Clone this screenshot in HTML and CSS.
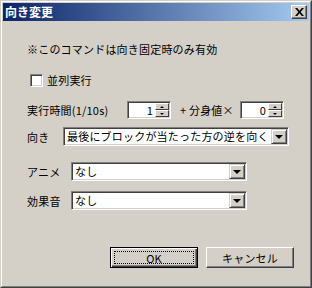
FILE: index.html
```html
<!DOCTYPE html>
<html lang="ja">
<head>
  <meta charset="UTF-8" />
  <title>向き変更</title>
  <link rel="stylesheet" href="styles.css">
</head>
<body>
  <div class="window">
    <div class="frame">
      <div class="titlebar">
        <span class="title">向き変更</span>
        <span class="close">
          <svg width="9" height="8" viewBox="0 0 9 8">
            <path d="M0 0h2.2l2.3 2.8L6.8 0H9L5.6 4 9 8H6.8L4.5 5.2 2.2 8H0l3.4-4z" fill="#000"/>
          </svg>
        </span>
      </div>

      <div class="content">
        <div class="note">※このコマンドは向き固定時のみ有効</div>

        <div class="check-row">
          <span class="checkbox"></span>
          <span>並列実行</span>
        </div>

        <div class="spin-row">
          <span class="spin-label">実行時間(1/10s)</span>
          <div class="spin">
            <span class="spin-value">1</span>
            <span class="updown">
              <span class="ud-btn"><i class="tri up"></i></span>
              <span class="ud-btn"><i class="tri down"></i></span>
            </span>
          </div>
          <span class="clone-label">+ 分身値×</span>
          <div class="spin">
            <span class="spin-value">0</span>
            <span class="updown">
              <span class="ud-btn"><i class="tri up"></i></span>
              <span class="ud-btn"><i class="tri down"></i></span>
            </span>
          </div>
        </div>

        <div class="combo-row row-dir">
          <span class="combo-label short">向き</span>
          <div class="combo combo-wide">
            <span class="combo-text">最後にブロックが当たった方の逆を向く</span>
            <span class="drop"><i class="tri down big"></i></span>
          </div>
        </div>

        <div class="combo-row row-anime">
          <span class="combo-label">アニメ</span>
          <div class="combo">
            <span class="combo-text">なし</span>
            <span class="drop"><i class="tri down big"></i></span>
          </div>
        </div>

        <div class="combo-row row-sound">
          <span class="combo-label">効果音</span>
          <div class="combo">
            <span class="combo-text">なし</span>
            <span class="drop"><i class="tri down big"></i></span>
          </div>
        </div>

        <div class="buttons">
          <div class="btn default"><span class="focus">OK</span></div>
          <div class="btn"><span>キャンセル</span></div>
        </div>
      </div>
    </div>
  </div>
</body>
</html>
```

FILE: styles.css
```css
body {
  margin: 0;
  background: #d4d0c8;
  font-family: "Noto Sans CJK JP", "Liberation Sans", sans-serif;
  font-size: 11px;
  letter-spacing: 0.2px;
  color: #000;
}

.window {
  width: 312px;
  height: 288px;
  box-sizing: border-box;
  border: 1px solid;
  border-color: #d4d0c8 #404040 #404040 #d4d0c8;
  background: #d4d0c8;
}

.frame {
  height: 100%;
  box-sizing: border-box;
  border: 1px solid;
  border-color: #fff #808080 #808080 #fff;
  padding: 1px;
}

.titlebar {
  height: 18px;
  display: flex;
  align-items: center;
  justify-content: space-between;
  padding: 0 2px 0 2px;
  background: linear-gradient(to right, #0a246a, #a6caf0);
}

.title {
  color: #fff;
  font-weight: bold;
  font-size: 12px;
  letter-spacing: 0;
  line-height: 18px;
}

.close {
  width: 16px;
  height: 14px;
  box-sizing: border-box;
  display: flex;
  align-items: center;
  justify-content: center;
  background: #d4d0c8;
  border: 1px solid;
  border-color: #fff #404040 #404040 #fff;
  box-shadow: inset -1px -1px 0 #808080;
}

.content {
  padding-left: 24px;
  display: flex;
  flex-direction: column;
}

.note {
  margin-top: 21px;
  height: 14px;
  line-height: 14px;
}

.check-row {
  margin-top: 17px;
  height: 14px;
  display: flex;
  align-items: center;
  gap: 4px;
  padding-left: 3px;
}

.checkbox {
  width: 13px;
  height: 13px;
  box-sizing: border-box;
  background: #fff;
  border: 1px solid;
  border-color: #808080 #fff #fff #808080;
  box-shadow: inset 1px 1px 0 #404040, inset -1px -1px 0 #d4d0c8;
}

.spin-row {
  margin-top: 14px;
  height: 18px;
  display: flex;
  align-items: center;
}

.spin-label {
  width: 100px;
}

.clone-label {
  width: 60px;
  margin-left: 9px;
  box-sizing: border-box;
  white-space: nowrap;
}

.spin {
  width: 44px;
  height: 18px;
  box-sizing: border-box;
  display: flex;
  background: #fff;
  border: 1px solid;
  border-color: #808080 #fff #fff #808080;
  box-shadow: inset 1px 1px 0 #404040, inset -1px -1px 0 #d4d0c8;
  padding: 1px;
}

.spin-value {
  flex: 1;
  text-align: right;
  padding-right: 2px;
  line-height: 14px;
}

.updown {
  width: 14px;
  display: flex;
  flex-direction: column;
}

.ud-btn {
  flex: 1;
  box-sizing: border-box;
  display: flex;
  align-items: center;
  justify-content: center;
  background: #d4d0c8;
  border: 1px solid;
  border-color: #fff #404040 #404040 #fff;
}

.tri {
  width: 0;
  height: 0;
  border-left: 2px solid transparent;
  border-right: 2px solid transparent;
}

.tri.up {
  border-bottom: 2px solid #000;
}

.tri.down {
  border-top: 2px solid #000;
}

.tri.big {
  border-left-width: 4px;
  border-right-width: 4px;
  border-top-width: 4px;
}

.combo-row {
  display: flex;
  align-items: center;
  height: 19px;
}

.row-dir {
  margin-top: 8px;
}

.row-anime {
  margin-top: 16px;
}

.row-sound {
  margin-top: 10px;
}

.combo-label {
  width: 44px;
}

.combo-label.short {
  width: 36px;
}

.combo {
  width: 176px;
  height: 19px;
  box-sizing: border-box;
  display: flex;
  align-items: stretch;
  background: #fff;
  border: 1px solid;
  border-color: #808080 #fff #fff #808080;
  box-shadow: inset 1px 1px 0 #404040, inset -1px -1px 0 #d4d0c8;
  padding: 1px;
}

.combo-wide {
  width: 226px;
}

.combo-text {
  flex: 1;
  padding-left: 2px;
  line-height: 15px;
  white-space: nowrap;
  overflow: hidden;
}

.drop {
  width: 16px;
  box-sizing: border-box;
  display: flex;
  align-items: center;
  justify-content: center;
  background: #d4d0c8;
  border: 1px solid;
  border-color: #d4d0c8 #404040 #404040 #d4d0c8;
  box-shadow: inset 1px 1px 0 #fff, inset -1px -1px 0 #808080;
}

.buttons {
  margin-top: 37px;
  display: flex;
  justify-content: flex-end;
  gap: 8px;
  padding-right: 15px;
}

.btn {
  width: 88px;
  height: 21px;
  box-sizing: border-box;
  display: flex;
  align-items: center;
  justify-content: center;
  background: #d4d0c8;
  border: 1px solid;
  border-color: #fff #404040 #404040 #fff;
  box-shadow: inset -1px -1px 0 #808080;
}

.btn.default {
  border-color: #000;
  box-shadow: inset 1px 1px 0 #fff, inset -1px -1px 0 #404040, inset -2px -2px 0 #808080;
  padding: 3px;
}

.focus {
  flex: 1;
  align-self: stretch;
  display: flex;
  align-items: center;
  justify-content: center;
  border: 1px dotted #000;
}
```
